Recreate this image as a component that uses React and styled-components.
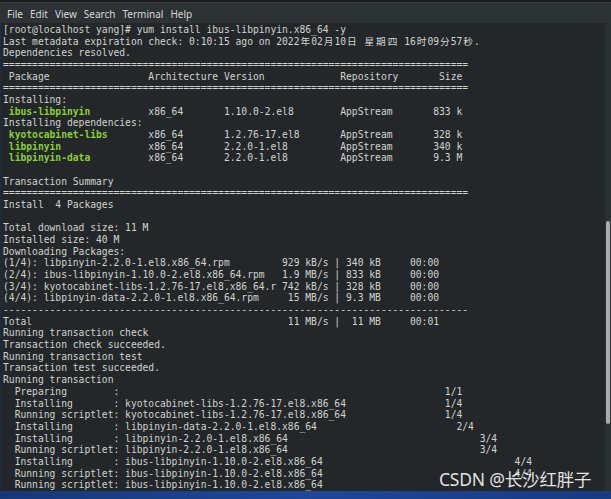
import React from 'react';
import styled, { createGlobalStyle } from 'styled-components';

const GlobalStyle = createGlobalStyle`
  html, body {
    margin: 0;
    padding: 0;
    background: #232729;
    overflow: hidden;
  }
`;

const Window = styled.div`
  width: 611px;
  height: 499px;
  display: flex;
  flex-direction: column;
  background: #232729;
  position: relative;
  overflow: hidden;
`;

const TopStrip = styled.div`
  height: 2px;
  background: #1b1d1e;
  border-bottom: 1px solid #3a3f42;
`;

const MenuBar = styled.div`
  height: 19px;
  display: flex;
  align-items: center;
  gap: 7px;
  padding-left: 7px;
  padding-top: 1px;
  background: #2d3235;
  font-family: 'Noto Sans', 'DejaVu Sans', sans-serif;
  font-size: 10px;
  color: #d6d8d8;
`;

const MenuItem = styled.span`
  line-height: 18px;
`;

const Body = styled.div`
  flex: 1;
  display: flex;
  min-height: 0;
`;

const Screen = styled.div`
  flex: 1;
  padding-left: 2px;
  padding-top: 1px;
  border-left: 1px solid #1d2c44;
  overflow: hidden;
  font-family: 'DejaVu Sans Mono', monospace;
  font-size: 9.675px;
  line-height: 11.68px;
  color: #d0d3ce;
  white-space: pre;
`;

const Line = styled.div`
  height: 11.68px;
`;

const Pkg = styled.span`
  color: #87d030;
  font-weight: bold;
`;

const Wide = styled.span`
  display: inline-block;
  width: 2ch;
  text-align: center;
  font-family: 'DejaVu Sans Mono', 'Noto Sans CJK SC', monospace;
`;

const Trough = styled.div`
  width: 6px;
  background: #2b3033;
  display: flex;
  flex-direction: column;
  padding-top: 198px;
`;

const Thumb = styled.div`
  width: 4px;
  margin-left: 1px;
  height: 203px;
  background: #a9abab;
  border-radius: 2px;
`;

const Desktop = styled.div`
  height: 8px;
  background: linear-gradient(90deg, #173778 0%, #1e479a 50%, #173a82 100%);
`;

const Watermark = styled.div`
  position: absolute;
  left: 439px;
  top: 466px;
  font-family: 'Noto Sans', 'Noto Sans CJK SC', sans-serif;
  font-size: 17.5px;
  color: rgba(255, 255, 255, 0.88);
  white-space: nowrap;
  letter-spacing: -0.2px;
`;

const sep = (ch) => ch.repeat(80);

const header =
  ' ' + 'Package'.padEnd(24) + 'Architecture ' + 'Version'.padEnd(20) + 'Repository'.padEnd(17) + 'Size';

const row = (name, arch, ver, repo, size) => [
  ' ',
  { pkg: name },
  ''.padEnd(24 - name.length) + arch.padEnd(13) + ver.padEnd(20) + repo.padEnd(16) + size,
];

const dl = (n, name, speed, size) =>
  `(${n}/4): ` + name.slice(0, 40).padEnd(40) + ' ' + speed.padStart(8) + ' | ' + size.padStart(6) + '     00:00';

const step = (label, pkg, count, col) => {
  const base = '  ' + label.padEnd(17) + ': ' + pkg;
  return count ? base.padEnd(col) + count : base;
};

const lines = [
  '[root@localhost yang]# yum install ibus-libpinyin.x86_64 -y',
  'Last metadata expiration check: 0:10:15 ago on 2022年02月10日 星期四 16时09分57秒.',
  'Dependencies resolved.',
  sep('='),
  header,
  sep('='),
  'Installing:',
  row('ibus-libpinyin', 'x86_64', '1.10.0-2.el8', 'AppStream', '833 k'),
  'Installing dependencies:',
  row('kyotocabinet-libs', 'x86_64', '1.2.76-17.el8', 'AppStream', '328 k'),
  row('libpinyin', 'x86_64', '2.2.0-1.el8', 'AppStream', '340 k'),
  row('libpinyin-data', 'x86_64', '2.2.0-1.el8', 'AppStream', '9.3 M'),
  '',
  'Transaction Summary',
  sep('='),
  'Install  4 Packages',
  '',
  'Total download size: 11 M',
  'Installed size: 40 M',
  'Downloading Packages:',
  dl(1, 'libpinyin-2.2.0-1.el8.x86_64.rpm', '929 kB/s', '340 kB'),
  dl(2, 'ibus-libpinyin-1.10.0-2.el8.x86_64.rpm', '1.9 MB/s', '833 kB'),
  dl(3, 'kyotocabinet-libs-1.2.76-17.el8.x86_64.rpm', '742 kB/s', '328 kB'),
  dl(4, 'libpinyin-data-2.2.0-1.el8.x86_64.rpm', '15 MB/s', '9.3 MB'),
  sep('-'),
  'Total'.padEnd(48) + ' 11 MB/s |  11 MB     00:01',
  'Running transaction check',
  'Transaction check succeeded.',
  'Running transaction test',
  'Transaction test succeeded.',
  'Running transaction',
  step('Preparing', '', '1/1', 76),
  step('Installing', 'kyotocabinet-libs-1.2.76-17.el8.x86_64', '1/4', 76),
  step('Running scriptlet', 'kyotocabinet-libs-1.2.76-17.el8.x86_64', '1/4', 76),
  step('Installing', 'libpinyin-data-2.2.0-1.el8.x86_64', '2/4', 78),
  step('Installing', 'libpinyin-2.2.0-1.el8.x86_64', '3/4', 82),
  step('Running scriptlet', 'libpinyin-2.2.0-1.el8.x86_64', '3/4', 82),
  step('Installing', 'ibus-libpinyin-1.10.0-2.el8.x86_64', '4/4', 88),
  step('Running scriptlet', 'ibus-libpinyin-1.10.0-2.el8.x86_64', '4/4', 88),
  step('Running scriptlet', 'ibus-libpinyin-1.10.0-2.el8.x86_64'),
];

// CJK characters take two terminal cells
const renderText = (text, key) =>
  text.split(/([\u3000-\u9fff])/).map((part, i) =>
    /^[\u3000-\u9fff]$/.test(part) ? <Wide key={`${key}-${i}`}>{part}</Wide> : part
  );

const renderLine = (line, i) => {
  const parts = Array.isArray(line) ? line : [line];
  return (
    <Line key={i}>
      {parts.map((p, j) =>
        typeof p === 'string' ? renderText(p, `${i}-${j}`) : <Pkg key={j}>{p.pkg}</Pkg>
      )}
    </Line>
  );
};

const menus = ['File', 'Edit', 'View', 'Search', 'Terminal', 'Help'];

export default function App() {
  return (
    <Window>
      <GlobalStyle />
      <TopStrip />
      <MenuBar>
        {menus.map((m) => (
          <MenuItem key={m}>{m}</MenuItem>
        ))}
      </MenuBar>
      <Body>
        <Screen>{lines.map(renderLine)}</Screen>
        <Trough>
          <Thumb />
        </Trough>
      </Body>
      <Desktop />
      <Watermark>CSDN @长沙红胖子</Watermark>
    </Window>
  );
}
